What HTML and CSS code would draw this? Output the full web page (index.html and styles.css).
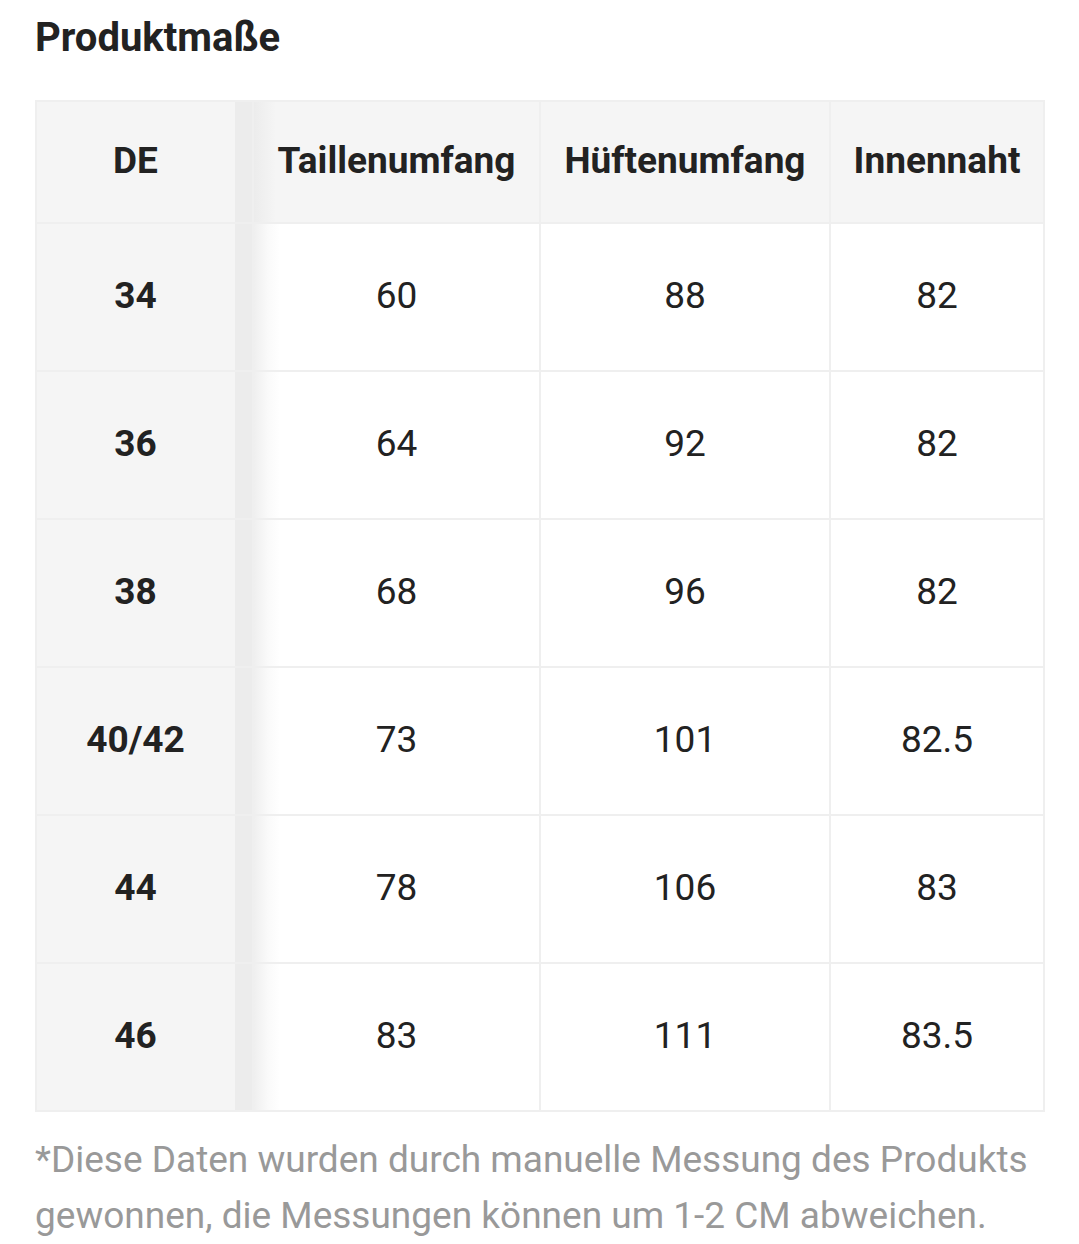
FILE: index.html
```html
<!DOCTYPE html>
<html lang="de">
<head>
<meta charset="utf-8">
<link rel="stylesheet" href="styles.css">
</head>
<body>
<div class="page">
  <h2 class="title">Produktmaße</h2>
  <table class="sizes">
    <thead>
      <tr><th class="fix">DE</th><th class="c2">Taillenumfang</th><th>Hüftenumfang</th><th>Innennaht</th></tr>
    </thead>
    <tbody>
      <tr><td class="fix">34</td><td class="c2">60</td><td>88</td><td>82</td></tr>
      <tr><td class="fix">36</td><td class="c2">64</td><td>92</td><td>82</td></tr>
      <tr><td class="fix">38</td><td class="c2">68</td><td>96</td><td>82</td></tr>
      <tr><td class="fix">40/42</td><td class="c2">73</td><td>101</td><td>82.5</td></tr>
      <tr><td class="fix">44</td><td class="c2">78</td><td>106</td><td>83</td></tr>
      <tr><td class="fix">46</td><td class="c2">83</td><td>111</td><td>83.5</td></tr>
    </tbody>
  </table>
  <p class="note">*Diese Daten wurden durch manuelle Messung des Produkts gewonnen, die Messungen können um 1-2 CM abweichen.</p>
</div>
</body>
</html>
```
FILE: styles.css
```css
html, body { margin: 0; padding: 0; background: #fff; }
body { font-family: Roboto, "Liberation Sans", Arial, sans-serif; color: #222; }
.page { padding: 14px 30px 0 35px; }
.title { margin: 0; font-size: 40px; font-weight: 700; line-height: 48px; color: #222; }
.sizes {
  margin-top: 38px;
  width: 1010px;
  border-collapse: collapse;
  table-layout: fixed;
  border: 2px solid #efefef;
}
.sizes th, .sizes td {
  border: 2px solid #efefef;
  text-align: center;
  padding: 0;
  font-size: 37px;
  color: #222;
}
.sizes th { height: 116px; background: #f5f5f5; font-weight: 700; padding-bottom: 4px; }
.sizes td { height: 142px; font-weight: 400; padding-bottom: 4px; }
.sizes .fix {
  width: 197px;
  font-weight: 700;
  background: linear-gradient(to right, #f5f5f5 0, #f5f5f5 198px, #ececec 198px);
  padding-right: 18px;
}
.sizes th:nth-child(2) { width: 285px; }
.sizes th:nth-child(3) { width: 288px; }
.sizes td.c2 { background: linear-gradient(to right, #efefef 0, #fafafa 14px, #fff 26px); }
.sizes th.c2 { background: linear-gradient(to right, #ececec 0, #f5f5f5 22px); }
.note {
  margin: 20px 0 0;
  font-size: 37px;
  line-height: 56px;
  color: #999;
}
```
